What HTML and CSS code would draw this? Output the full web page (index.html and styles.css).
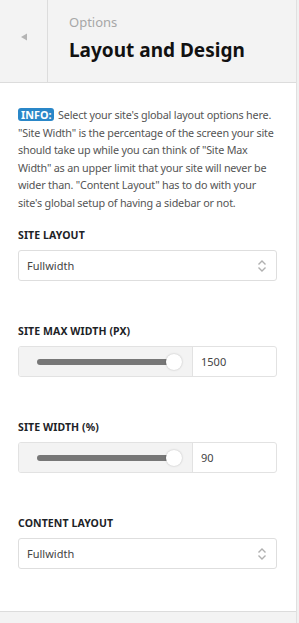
FILE: index.html
```html
<!DOCTYPE html>
<html lang="en">
<head>
<meta charset="UTF-8">
<meta name="viewport" content="width=device-width, initial-scale=1.0">
<title>Layout and Design</title>
<link rel="stylesheet" href="styles.css">
</head>
<body>

<div class="panel">
  <div class="panel-head">
    <button class="back-btn" aria-label="Back">
      <svg width="8" height="8" viewBox="0 0 8 8"><path d="M7 0.5 L7 7.5 L1 4 Z" fill="#b4b4b4"/></svg>
    </button>
    <div class="titles">
      <span class="crumb">Options</span>
      <h2>Layout and Design</h2>
    </div>
  </div>

  <div class="panel-body">
    <p class="info"><span class="badge">INFO:</span> Select your site's global layout options here. "Site Width" is the percentage of the screen your site should take up while you can think of "Site Max Width" as an upper limit that your site will never be wider than. "Content Layout" has to do with your site's global setup of having a sidebar or not.</p>

    <div class="field">
      <label class="field-label">Site Layout</label>
      <div class="select">
        <span>Fullwidth</span>
        <svg width="10" height="14" viewBox="0 0 10 14"><path d="M1.5 5.5 L5 2 L8.5 5.5 M1.5 8.5 L5 12 L8.5 8.5" fill="none" stroke="#b0b0b0" stroke-width="1.4"/></svg>
      </div>
    </div>

    <div class="field">
      <label class="field-label">Site Max Width (px)</label>
      <div class="range-group">
        <div class="range">
          <div class="track"></div>
          <div class="thumb"></div>
        </div>
        <div class="range-value">1500</div>
      </div>
    </div>

    <div class="field">
      <label class="field-label">Site Width (%)</label>
      <div class="range-group">
        <div class="range">
          <div class="track"></div>
          <div class="thumb"></div>
        </div>
        <div class="range-value">90</div>
      </div>
    </div>

    <div class="field">
      <label class="field-label">Content Layout</label>
      <div class="select">
        <span>Fullwidth</span>
        <svg width="10" height="14" viewBox="0 0 10 14"><path d="M1.5 5.5 L5 2 L8.5 5.5 M1.5 8.5 L5 12 L8.5 8.5" fill="none" stroke="#b0b0b0" stroke-width="1.4"/></svg>
      </div>
    </div>
  </div>

  <div class="panel-foot"></div>
</div>

</body>
</html>
```

FILE: styles.css
```css
html, body {
  margin: 0;
  height: 100%;
  overflow: hidden;
}
body {
  font-family: "Noto Sans", "Open Sans", sans-serif;
  background-color: #f1f1f1;
  color: #1d2327;
}
.panel {
  width: 296px;
  height: 100%;
  display: flex;
  flex-direction: column;
  background-color: #fff;
  border-right: 1px solid #e0e0e0;
}
.panel-head {
  flex-shrink: 0;
  display: flex;
  height: 82px;
  background-color: #f3f3f3;
  border-bottom: 1px solid #dcdcdc;
}
.back-btn {
  width: 48px;
  padding: 0 0 9px;
  border: none;
  border-right: 1px solid #dcdcdc;
  background: none;
  display: flex;
  align-items: center;
  justify-content: center;
}
.titles {
  padding: 13px 0 0 21px;
}
.crumb {
  display: block;
  font-size: 13px;
  line-height: 18px;
  color: #a7a7a7;
}
.titles h2 {
  margin: 6px 0 0;
  font-size: 19px;
  line-height: 26px;
  font-weight: 700;
  color: #111;
}
.panel-body {
  flex: 1;
  padding: 23px 19px 0 18px;
}
.info {
  margin: 0 0 16px;
  font-size: 10.8px;
  line-height: 17.5px;
  letter-spacing: -0.2px;
  color: #555;
}
.badge {
  display: inline-block;
  padding: 0 3px;
  margin-right: 1px;
  line-height: 13px;
  letter-spacing: 0;
  background-color: #2a87c8;
  color: #fff;
  font-weight: 700;
  border-radius: 3px;
}
.field {
  margin-bottom: 42px;
}
.field-label {
  display: block;
  font-size: 10.5px;
  line-height: 16px;
  font-weight: 700;
  letter-spacing: 0.1px;
  text-transform: uppercase;
  margin-bottom: 7px;
}
.select {
  display: flex;
  align-items: center;
  justify-content: space-between;
  height: 29px;
  padding: 0 9px 0 8px;
  border: 1px solid #dedede;
  border-radius: 3px;
  font-size: 11px;
  color: #444;
}
.range-group {
  display: flex;
  height: 29px;
  border: 1px solid #e2e2e2;
  border-radius: 3px;
  overflow: hidden;
}
.range {
  position: relative;
  width: 173px;
  background-color: #f3f3f3;
  border-right: 1px solid #e2e2e2;
}
.track {
  position: absolute;
  left: 18px;
  top: 12px;
  width: 138px;
  height: 6px;
  border-radius: 3px;
  background-color: #777;
}
.thumb {
  position: absolute;
  left: 147px;
  top: 7px;
  width: 16px;
  height: 16px;
  border-radius: 50%;
  background-color: #fff;
  box-shadow: 0 0 2px rgba(0, 0, 0, 0.25);
}
.range-value {
  flex: 1;
  display: flex;
  align-items: center;
  padding-left: 8px;
  font-size: 11px;
  color: #444;
}
.panel-foot {
  flex-shrink: 0;
  height: 13px;
  background-color: #f3f3f3;
  border-top: 1px solid #dcdcdc;
}
```
